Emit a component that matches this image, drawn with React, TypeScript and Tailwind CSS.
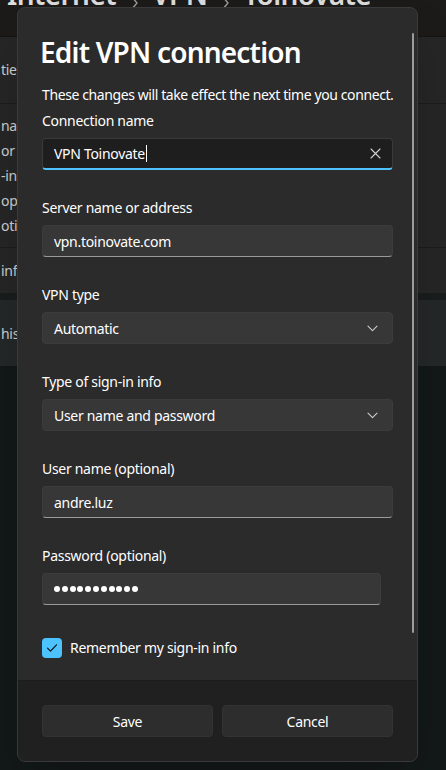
import React from "react";

function Chevron() {
  return (
    <svg width="11" height="7" viewBox="0 0 11 7" fill="none">
      <path d="M1 1.2L5.5 5.6L10 1.2" stroke="#cfcfcf" strokeWidth="1.1" strokeLinecap="round" strokeLinejoin="round" />
    </svg>
  );
}

function Crumb() {
  return (
    <svg width="10" height="18" viewBox="0 0 10 18" fill="none" className="mx-[13px]">
      <path d="M2 2L8 9L2 16" stroke="#9a9a9a" strokeWidth="1.4" strokeLinecap="round" strokeLinejoin="round" />
    </svg>
  );
}

function Label({ children }: { children: React.ReactNode }) {
  return <div className="h-[20px] leading-[20px] text-[14px] text-white">{children}</div>;
}

function TextBox({ value }: { value: string }) {
  return (
    <div className="mt-[7px] h-[32px] flex items-center px-[11px] rounded-[4px] bg-[#373737] border border-[#3c3c3c] border-b-[#9a9a9a] text-[14px] text-white">
      {value}
    </div>
  );
}

function Select({ value }: { value: string }) {
  return (
    <div className="mt-[7px] h-[32px] flex items-center justify-between pl-[11px] pr-[14px] rounded-[4px] bg-[#373737] border border-[#3c3c3c] text-[14px] text-white">
      <span>{value}</span>
      <Chevron />
    </div>
  );
}

export default function App() {
  const bgRows = [
    { h: "h-[67px]", lines: ["ties"] },
    { h: "h-[144px]", lines: ["nan", "or", "-in", "opt", "otic"] },
    { h: "h-[46px]", lines: ["inf"] },
  ];

  return (
    <div className="relative w-[446px] h-[770px] overflow-hidden bg-[#131818] font-['Noto_Sans',sans-serif] tracking-[-0.3px]">
      {/* Settings page behind the dialog */}
      <div className="flex flex-col">
        <div className="h-[37px] bg-[#1c1b1a] overflow-hidden border-b border-[#141414]">
          <div className="-mt-[24px] pl-[7px] flex items-end text-[28px] font-semibold leading-[36px] text-[#dcdcdc] whitespace-nowrap tracking-[-0.6px]">
            <span>Internet</span>
            <Crumb />
            <span>VPN</span>
            <Crumb />
            <span>Toinovate</span>
          </div>
        </div>
        {bgRows.map((row, i) => (
          <div key={i} className={`${row.h} bg-[#262626] flex flex-col justify-center gap-[5px] border-b border-[#1c1c1c] text-[14px] text-[#d0d0d0]`}>
            {row.lines.map((l) => (
              <div key={l} className="leading-[20px] pl-[1px]">{l}</div>
            ))}
          </div>
        ))}
        <div className="h-[6px] bg-[#1a1d1e]" />
        <div className="h-[66px] bg-[#242829] flex items-center text-[14px] text-[#d0d0d0] pl-[1px]">his</div>
      </div>

      {/* Dialog */}
      <div className="absolute left-[17px] top-[7px] w-[401px] h-[755px] rounded-[8px] border border-[#3a3a3a] bg-[#2b2b2b] overflow-hidden flex flex-col shadow-2xl">
        <div className="relative flex-1 px-[24px] pt-[26px]">
          <h1 className="-ml-[2px] text-[28px] font-semibold leading-[36px] text-white tracking-[-0.8px]">Edit VPN connection</h1>
          <p className="mt-[15px] text-[14px] leading-[20px] text-white whitespace-nowrap tracking-[-0.4px]">
            These changes will take effect the next time you connect.
          </p>
          <div className="mt-[6px]">
            <Label>Connection name</Label>
            <div className="mt-[7px] h-[32px] flex items-center justify-between pl-[11px] pr-[11px] rounded-[4px] bg-[#1e1e1e] border border-[#3a3a3a] border-b-2 border-b-[#4cc2ff] text-[14px] text-white">
              <span className="flex items-center">
                VPN Toinovate
                <span className="ml-[1px] w-[1px] h-[17px] bg-white" />
              </span>
              <svg width="11" height="11" viewBox="0 0 11 11" fill="none">
                <path d="M1 1L10 10M10 1L1 10" stroke="#cfcfcf" strokeWidth="1.1" strokeLinecap="round" />
              </svg>
            </div>
          </div>
          <div className="mt-[28px]">
            <Label>Server name or address</Label>
            <TextBox value="vpn.toinovate.com" />
          </div>
          <div className="mt-[28px]">
            <Label>VPN type</Label>
            <Select value="Automatic" />
          </div>
          <div className="mt-[28px]">
            <Label>Type of sign-in info</Label>
            <Select value="User name and password" />
          </div>
          <div className="mt-[28px]">
            <Label>User name (optional)</Label>
            <TextBox value="andre.luz" />
          </div>
          <div className="mt-[28px] w-[339px]">
            <Label>Password (optional)</Label>
            <div className="mt-[7px] h-[32px] flex items-center gap-[1.8px] px-[11px] rounded-[4px] bg-[#373737] border border-[#3c3c3c] border-b-[#9a9a9a]">
              {Array.from({ length: 11 }).map((_, i) => (
                <span key={i} className="w-[6px] h-[6px] rounded-full bg-white" />
              ))}
            </div>
          </div>
          <label className="mt-[32px] flex items-center gap-[8px] text-[14px] text-white">
            <span className="w-[20px] h-[20px] rounded-[4px] bg-[#4cc2ff] flex items-center justify-center">
              <svg width="12" height="10" viewBox="0 0 12 10" fill="none">
                <path d="M1.5 5.2L4.5 8.2L10.5 1.8" stroke="#111" strokeWidth="1.2" strokeLinecap="round" strokeLinejoin="round" />
              </svg>
            </span>
            Remember my sign-in info
          </label>

          {/* scrollbar */}
          <div className="absolute right-[3px] top-[25px] w-[2px] h-[600px] rounded-full bg-[#9b9b9b]" />
        </div>

        <div className="h-[81px] bg-[#202020] border-t border-[#1d1d1d] px-[24px] pt-[24px] flex gap-[9px]">
          <button className="flex-1 h-[32px] rounded-[4px] bg-[#2d2d2d] border border-[#333] text-[14px] text-white">Save</button>
          <button className="flex-1 h-[32px] rounded-[4px] bg-[#2d2d2d] border border-[#333] text-[14px] text-white">Cancel</button>
        </div>
      </div>
    </div>
  );
}
